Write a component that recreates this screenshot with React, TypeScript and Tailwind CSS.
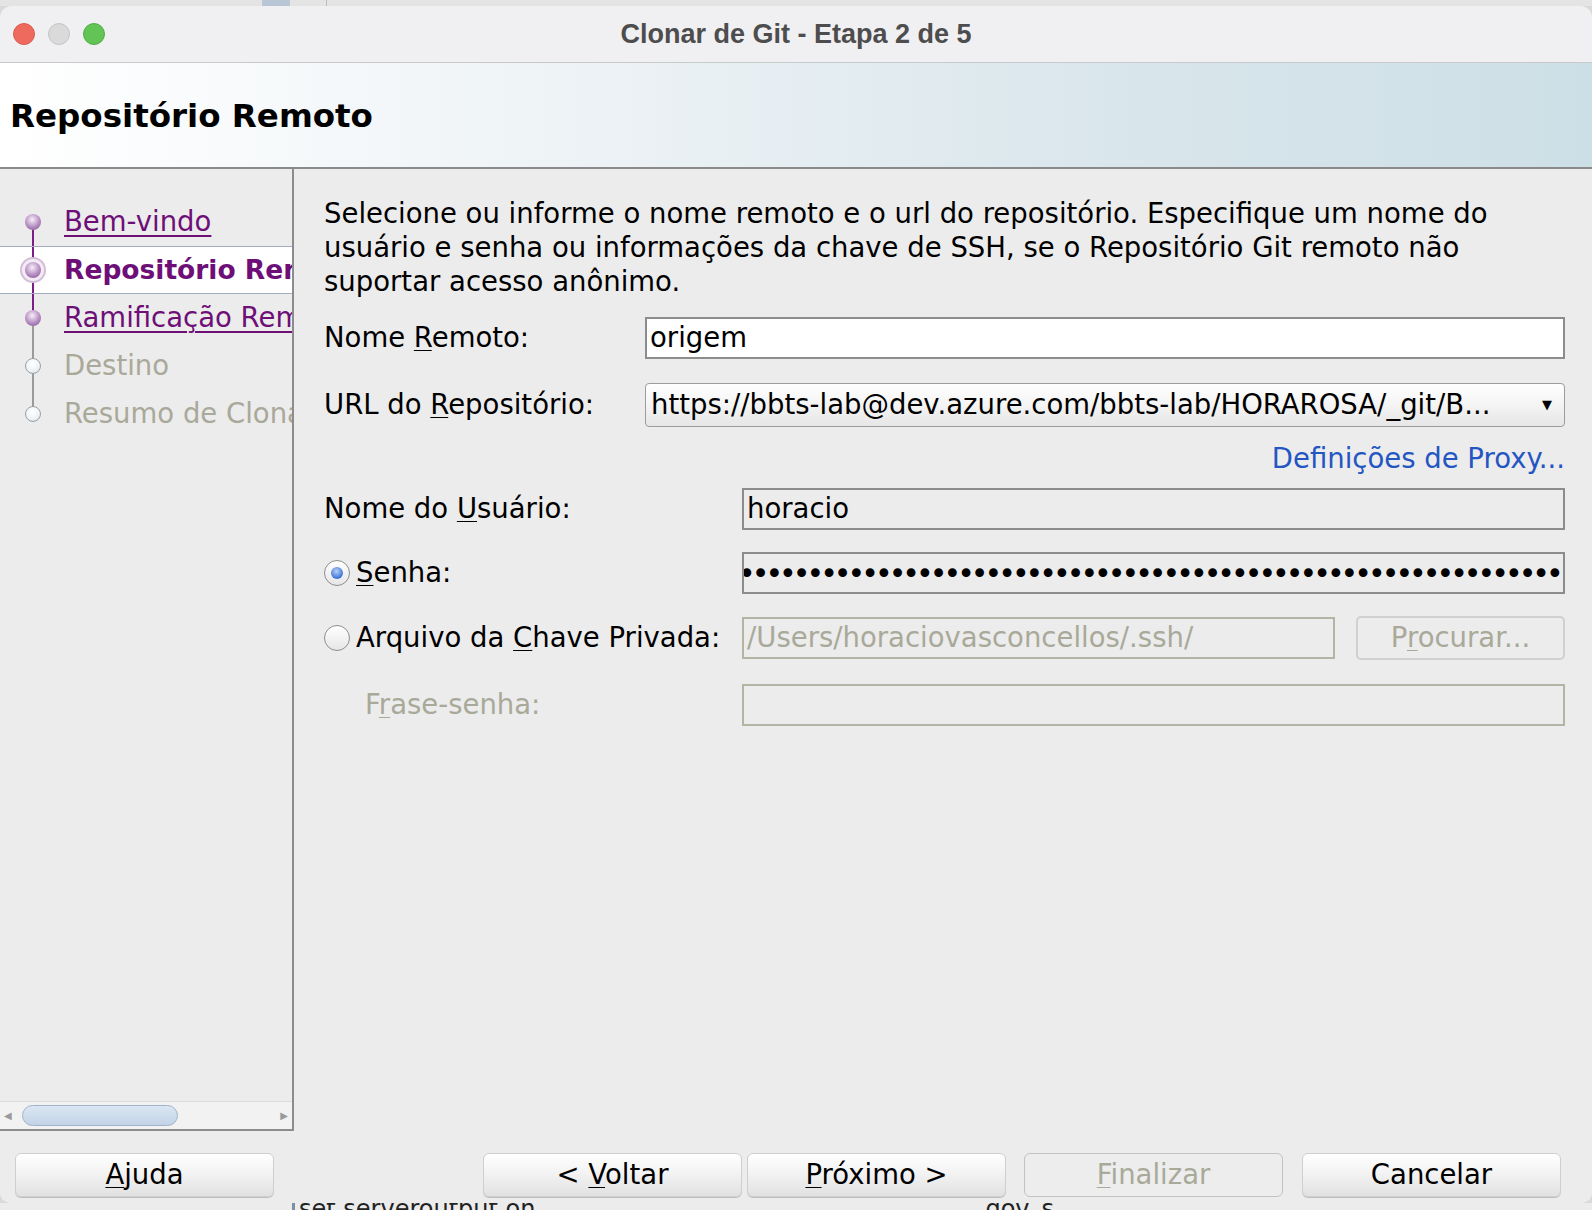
import React from "react";

type Step = { label: string; state: "done" | "current" | "todo" };

const steps: Step[] = [
  { label: "Bem-vindo", state: "done" },
  { label: "Repositório Remoto", state: "current" },
  { label: "Ramificação Remota", state: "done" },
  { label: "Destino", state: "todo" },
  { label: "Resumo de Clonagem", state: "todo" },
];

// mnemonic label: underline one letter
function Mn({ pre, key1, post }: { pre?: string; key1: string; post?: string }) {
  return (
    <span className="whitespace-pre">
      {pre}
      <span className="underline underline-offset-[3px] decoration-1">{key1}</span>
      {post}
    </span>
  );
}

function Bullet({ state }: { state: Step["state"] }) {
  if (state === "current") {
    return (
      <span className="flex h-[26px] w-[26px] items-center justify-center rounded-full border-2 border-[#d3bdd9] bg-[#f3ecf5]">
        <span className="h-[16px] w-[16px] rounded-full bg-[radial-gradient(circle_at_45%_35%,#f6eef8,#b48cc0_55%,#7c4a8b)]" />
      </span>
    );
  }
  if (state === "done") {
    return (
      <span className="h-[16px] w-[16px] rounded-full bg-[radial-gradient(circle_at_45%_35%,#f6eef8,#b48cc0_55%,#7c4a8b)]" />
    );
  }
  return (
    <span className="h-[16px] w-[16px] rounded-full border border-[#9aa2aa] bg-[radial-gradient(circle_at_45%_35%,#ffffff,#eef1f4_60%,#c4cad0)]" />
  );
}

function Sidebar() {
  return (
    <div className="flex w-[294px] shrink-0 flex-col border-b-2 border-r-2 border-[#8c8c8c] bg-[#ececec]">
      <div className="flex-1 pt-[29px]">
        {steps.map((s, i) => {
          const upColor = i === 0 ? "" : i <= 2 ? "bg-[#7b1f86]" : "bg-[#9a9a9a]";
          const downColor = i === steps.length - 1 ? "" : i < 2 ? "bg-[#7b1f86]" : "bg-[#9a9a9a]";
          return (
            <div
              key={s.label}
              className={`relative flex h-[48px] items-center overflow-hidden whitespace-nowrap ${
                s.state === "current" ? "border-y border-[#a3adc2] bg-white" : ""
              }`}
            >
              {upColor && <span className={`absolute left-[32px] top-0 h-1/2 w-[2px] ${upColor}`} />}
              {downColor && <span className={`absolute left-[32px] top-1/2 h-1/2 w-[2px] ${downColor}`} />}
              <span className="relative z-10 flex w-[66px] shrink-0 justify-center">
                <Bullet state={s.state} />
              </span>
              {s.state === "current" && (
                <span className="-ml-[2px] text-[26.5px] font-bold text-[#6e0f78]">{s.label}</span>
              )}
              {s.state === "done" && (
                <span className="-ml-[2px] text-[27.5px] text-[#6e0f78] underline underline-offset-[4px] decoration-[2px]">
                  {s.label}
                </span>
              )}
              {s.state === "todo" && <span className="-ml-[2px] text-[27.5px] text-[#a9a99a]">{s.label}</span>}
            </div>
          );
        })}
      </div>
      {/* horizontal scrollbar */}
      <div className="flex h-[28px] items-center border-t border-[#dcdcdc] bg-[#f2f2f2] px-[4px]">
        <span className="text-[10px] text-[#9a9a9a]">◀</span>
        <span className="ml-[10px] h-[21px] w-[156px] rounded-full border border-[#9fb3ca] bg-[linear-gradient(#dbe6f2,#c2d3e6)]" />
        <span className="ml-auto text-[10px] text-[#9a9a9a]">▶</span>
      </div>
    </div>
  );
}

function Field({ children, className = "" }: { children?: React.ReactNode; className?: string }) {
  return (
    <div className={`flex h-[42px] min-w-0 flex-1 items-center overflow-hidden border-2 px-[3px] text-[27.5px] ${className}`}>
      {children}
    </div>
  );
}

function Radio({ checked }: { checked?: boolean }) {
  return (
    <span className="mr-[6px] flex h-[26px] w-[26px] shrink-0 items-center justify-center rounded-full border border-[#8e8e8e] bg-[linear-gradient(#ffffff,#e6e6e6)]">
      {checked && (
        <span className="h-[12px] w-[12px] rounded-full bg-[radial-gradient(circle_at_45%_35%,#b8d0f6,#3d73d6_70%,#2452a8)]" />
      )}
    </span>
  );
}

function Btn({ children, disabled }: { children: React.ReactNode; disabled?: boolean }) {
  return (
    <div
      className={`flex h-[44px] w-[259px] items-center justify-center rounded-[6px] border text-[27.5px] ${
        disabled
          ? "border-[#c2c2c2] bg-[#ededed] text-[#a9a99a]"
          : "border-[#cfcfcf] bg-[linear-gradient(#ffffff,#f3f3f3_45%,#e1e1e1)] text-black shadow-[0_1px_0_#bdbdbd]"
      }`}
    >
      {children}
    </div>
  );
}

export default function App() {
  return (
    <div className="relative h-[1210px] w-[1592px] overflow-hidden bg-[#d9d9d9] font-['DejaVu_Sans',sans-serif] text-black">
      {/* other window behind */}
      <div className="flex h-[6px] bg-[#e4e4e4]">
        <span className="ml-[262px] w-[28px] bg-[#b9c6d6]" />
        <span className="ml-[36px] w-[1px] bg-[#bdbdbd]" />
      </div>

      <div className="flex h-[1197px] flex-col overflow-hidden rounded-t-[12px] rounded-b-[10px] bg-[#ececec]">
        {/* title bar */}
        <div className="relative flex h-[57px] shrink-0 items-center border-b border-[#c9c9cb] bg-[#f0f0f2]">
          <div className="flex items-center gap-[13px] pl-[13px]">
            <span className="h-[22px] w-[22px] rounded-full border border-[#d95a50] bg-[#ee6a5f]" />
            <span className="h-[22px] w-[22px] rounded-full border border-[#c4c4c4] bg-[#dadada]" />
            <span className="h-[22px] w-[22px] rounded-full border border-[#4fae44] bg-[#61c454]" />
          </div>
          <div className="absolute inset-x-0 top-0 flex h-full items-center justify-center font-['Liberation_Sans',sans-serif] text-[27px] font-bold text-[#4d4d4d]">
            Clonar de Git - Etapa 2 de 5
          </div>
        </div>

        {/* header */}
        <div className="flex h-[106px] shrink-0 items-center border-b-2 border-[#8a8a8a] bg-[linear-gradient(90deg,#ffffff,#eef3f6_35%,#d9e6ec_70%,#cddfe6)] pl-[10px]">
          <h1 className="pt-[2px] text-[32.5px] font-bold">Repositório Remoto</h1>
        </div>

        {/* body */}
        <div className="flex h-[962px] shrink-0">
          <Sidebar />
          <div className="flex min-w-0 flex-1 flex-col pl-[30px] pr-[27px] pt-[27px]">
            <p className="whitespace-nowrap text-[27.5px] leading-[34px]">
              Selecione ou informe o nome remoto e o url do repositório. Especifique um nome do
              <br />
              usuário e senha ou informações da chave de SSH, se o Repositório Git remoto não
              <br />
              suportar acesso anônimo.
            </p>

            <div className="mt-[19px] flex items-center">
              <div className="w-[321px] shrink-0 text-[27.5px]">
                <Mn pre="Nome " key1="R" post="emoto:" />
              </div>
              <Field className="h-[41px] border-[#8c8c8c] bg-white">origem</Field>
            </div>

            <div className="mt-[24px] flex items-center">
              <div className="w-[321px] shrink-0 text-[27.5px]">
                <Mn pre="URL do " key1="R" post="epositório:" />
              </div>
              <div className="flex h-[44px] min-w-0 flex-1 items-center overflow-hidden rounded-[4px] border border-[#9c9c9c] bg-[linear-gradient(#ffffff,#f4f4f4_50%,#e6e6e6)] pl-[5px] pr-[12px] text-[27.5px]">
                <span className="min-w-0 flex-1 overflow-hidden whitespace-nowrap">
                  https://bbts-lab@dev.azure.com/bbts-lab/HORAROSA/_git/B...
                </span>
                <span className="text-[13px]">▼</span>
              </div>
            </div>

            <div className="mt-[17px] flex h-[30px] items-center justify-end text-[27.5px] text-[#2456c3]">
              Definições de Proxy...
            </div>

            <div className="mt-[14px] flex items-center">
              <div className="w-[418px] shrink-0 text-[27.5px]">
                <Mn pre="Nome do " key1="U" post="suário:" />
              </div>
              <Field className="border-[#8c8c8c] bg-[#ececec]">horacio</Field>
            </div>

            <div className="mt-[22px] flex items-center">
              <div className="flex w-[418px] shrink-0 items-center text-[27.5px]">
                <Radio checked />
                <Mn key1="S" post="enha:" />
              </div>
              <Field className="border-[#8c8c8c] bg-[#ececec]">
                <span className="-ml-[9px] whitespace-nowrap text-[30px] tracking-[-4px]">
                  {"•".repeat(64)}
                </span>
              </Field>
            </div>

            <div className="mt-[22px] flex items-center">
              <div className="flex w-[418px] shrink-0 items-center text-[27.5px]">
                <Radio />
                <Mn pre="Arquivo da " key1="C" post="have Privada:" />
              </div>
              <Field className="border-[#b4b4a4] bg-[#ececec] text-[#a9a99a]">
                <span className="whitespace-nowrap">/Users/horaciovasconcellos/.ssh/</span>
              </Field>
              <div className="ml-[21px] flex h-[44px] w-[209px] shrink-0 items-center justify-center rounded-[5px] border-2 border-[#d0d0d0] text-[27.5px] text-[#a9a99a]">
                <Mn pre="P" key1="r" post="ocurar..." />
              </div>
            </div>

            <div className="mt-[24px] flex items-center">
              <div className="w-[418px] shrink-0 pl-[41px] text-[27.5px] text-[#a9a99a]">
                <Mn pre="F" key1="r" post="ase-senha:" />
              </div>
              <Field className="border-[#b4b4a4] bg-[#ececec]" />
            </div>
          </div>
        </div>

        {/* footer buttons */}
        <div className="flex flex-1 items-start pl-[15px] pt-[22px]">
          <Btn>
            <Mn key1="A" post="juda" />
          </Btn>
          <div className="ml-[209px]">
            <Btn>
              <Mn pre="< " key1="V" post="oltar" />
            </Btn>
          </div>
          <div className="ml-[5px]">
            <Btn>
              <Mn key1="P" post="róximo >" />
            </Btn>
          </div>
          <div className="ml-[18px]">
            <Btn disabled>
              <Mn key1="F" post="inalizar" />
            </Btn>
          </div>
          <div className="ml-[19px]">
            <Btn>Cancelar</Btn>
          </div>
        </div>
      </div>

      {/* content of the window behind, cut off */}
      <div className="h-[7px] overflow-hidden bg-[#ececec]">
        <div className="ml-[292px] -mt-[4px] flex">
          <span className="mr-[4px] h-[20px] w-[3px] bg-[#7d8ea6]" />
          <span className="text-[24px] leading-[20px] text-[#222]">set serveroutput on</span>
          <span className="ml-[450px] text-[24px] leading-[20px] text-[#222]">gov_s</span>
        </div>
      </div>
    </div>
  );
}
